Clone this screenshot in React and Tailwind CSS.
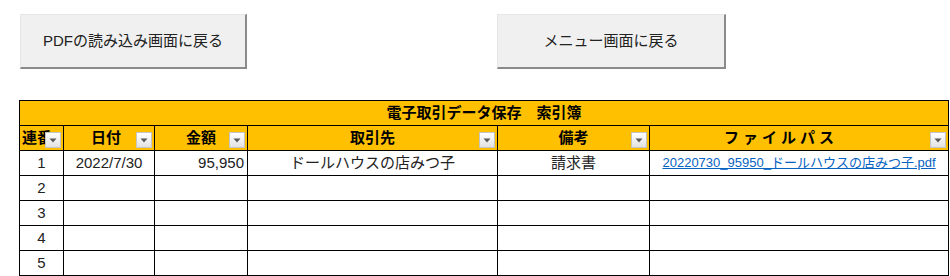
import React from 'react'

const cols = [44, 91, 93, 250, 152, 299]

const FilterButton = () => (
    <span className="absolute right-[2px] bottom-[2px] w-[16px] h-[16px] border border-[#c4c4c4] bg-gradient-to-b from-white to-[#e2e2e2] flex items-center justify-center">
        <svg width="8" height="5" viewBox="0 0 8 5">
            <path d="M0.5 0.5 L7.5 0.5 L4 4.5 Z" fill="#5a5a5a" />
        </svg>
    </span>
)

const headers = [
    { label: '連番', cls: 'text-left pl-[2px]' },
    { label: '日付', cls: 'text-center pr-[6px]' },
    { label: '金額', cls: 'text-center' },
    { label: '取引先', cls: 'text-center' },
    { label: '備考', cls: 'text-center' },
    { label: 'ファイルパス', cls: 'text-center pr-[36px] tracking-[4px]' },
]

const rows = [
    ['1', '2022/7/30', '95,950', 'ドールハウスの店みつ子', '請求書', '20220730_95950_ドールハウスの店みつ子.pdf'],
    ['2', '', '', '', '', ''],
    ['3', '', '', '', '', ''],
    ['4', '', '', '', '', ''],
    ['5', '', '', '', '', ''],
]

const App = () => {
    return (
        <div
            className="w-[950px] h-[276px] bg-white overflow-hidden pt-[14px]"
            style={{ fontFamily: '"Liberation Sans", "Noto Sans CJK JP", sans-serif' }}
        >
            {/* Buttons */}
            <div className="flex pl-[20px]">
                <button className="w-[227px] h-[55px] bg-[#f0f0f0] border-t border-l border-[#e6e6e6] border-r-2 border-b-2 border-r-[#8a8a8a] border-b-[#8a8a8a] text-[15px] text-[#222]">
                    PDFの読み込み画面に戻る
                </button>
                <button className="ml-[250px] w-[229px] h-[55px] bg-[#f0f0f0] border-t border-l border-[#e6e6e6] border-r-2 border-b-2 border-r-[#8a8a8a] border-b-[#8a8a8a] text-[15px] text-[#222]">
                    メニュー画面に戻る
                </button>
            </div>

            {/* Index table */}
            <div className="mt-[31px] pl-[19px]">
                <table className="table-fixed border-collapse w-[930px]">
                    <colgroup>
                        {cols.map((w, i) => (
                            <col key={i} style={{ width: w }} />
                        ))}
                    </colgroup>
                    <tbody>
                        <tr className="h-[25px] bg-[#ffc000]">
                            <td colSpan={6} className="border border-black text-center font-bold text-[15px] text-black p-0">
                                電子取引データ保存　索引簿
                            </td>
                        </tr>
                        <tr className="h-[25px] bg-[#ffc000]">
                            {headers.map((h, i) => (
                                <td key={i} className={`relative border border-black font-bold text-[15px] text-black p-0 whitespace-nowrap overflow-hidden ${h.cls}`}>
                                    {h.label}
                                    <FilterButton />
                                </td>
                            ))}
                        </tr>
                        {rows.map((r, ri) => (
                            <tr key={ri} className="h-[25px] bg-white">
                                <td className="border border-black text-center text-[15px] text-[#222] p-0">{r[0]}</td>
                                <td className="border border-black text-center text-[15px] text-[#222] p-0">{r[1]}</td>
                                <td className="border border-black text-right pr-[3px] text-[15px] text-[#222] p-0">{r[2]}</td>
                                <td className="border border-black text-center text-[15px] text-[#222] p-0">{r[3]}</td>
                                <td className="border border-black text-center text-[15px] text-[#222] p-0">{r[4]}</td>
                                <td className="border border-black text-center text-[13px] p-0 whitespace-nowrap">
                                    {r[5] && (
                                        <a href="#" className="text-[#0563c1] underline">
                                            {r[5]}
                                        </a>
                                    )}
                                </td>
                            </tr>
                        ))}
                    </tbody>
                </table>
            </div>
        </div>
    )
}

export default App
